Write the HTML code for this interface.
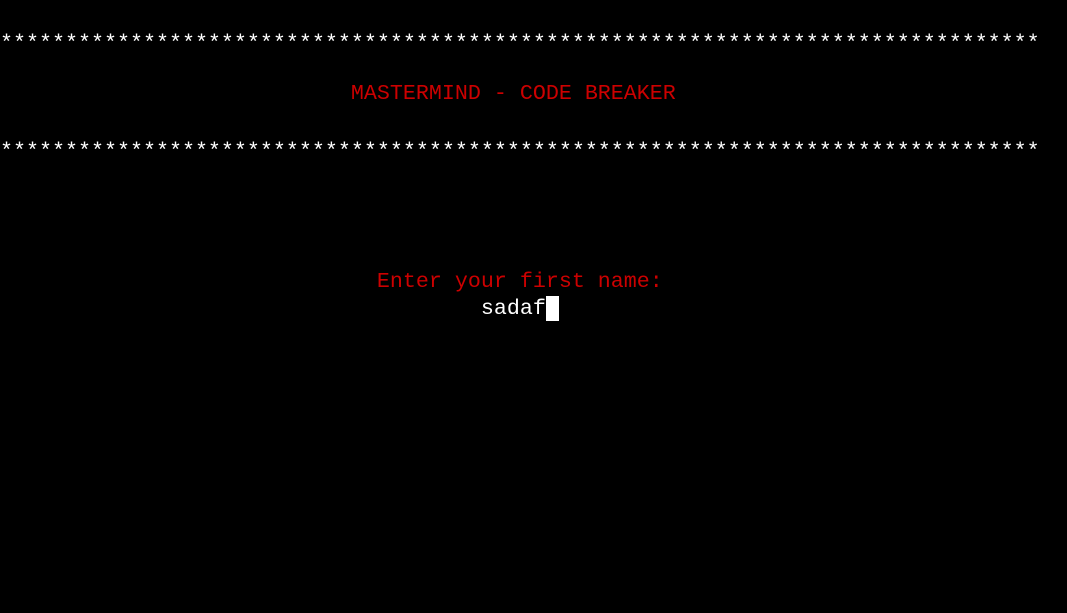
<!DOCTYPE html>
<html><head><style>
html,body{margin:0;padding:0;background:#000;width:1067px;height:613px;overflow:hidden}
.l{position:absolute;left:0;font-family:"Liberation Mono","Courier New",monospace;font-size:21.67px;line-height:27px;white-space:pre;color:#fff}
.r{color:#cc0000}
.cur{position:absolute;left:546px;top:296px;width:13px;height:25px;background:#fff}
</style></head><body>
<div class="l" style="top:30px">********************************************************************************</div>
<div class="l r" style="top:80px">                           MASTERMIND - CODE BREAKER</div>
<div class="l" style="top:138px">********************************************************************************</div>
<div class="l r" style="top:268px">                             Enter your first name:</div>
<div class="l" style="top:295px">                                     sadaf</div>
<div class="cur"></div>
</body></html>
